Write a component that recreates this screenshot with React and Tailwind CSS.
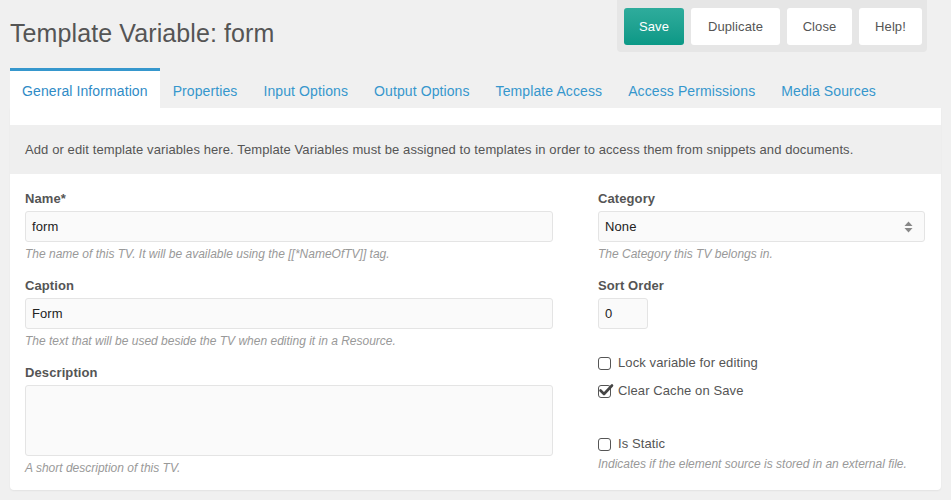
import React from 'react';

const tabs = [
  'General Information',
  'Properties',
  'Input Options',
  'Output Options',
  'Template Access',
  'Access Permissions',
  'Media Sources',
];

function Label({ children }) {
  return <div className="h-4 leading-4 text-[13px] font-bold text-[#555]">{children}</div>;
}

function Help({ children }) {
  return <div className="mt-[5px] h-[14px] leading-[14px] text-[12px] italic text-[#999] tracking-normal">{children}</div>;
}

function TextInput({ value, className = '' }) {
  return (
    <div
      className={`mt-[4px] h-[31px] flex items-center px-[6px] bg-[#fafafa] border border-[#e4e4e4] rounded-[3px] text-[13px] text-[#222] ${className}`}
    >
      {value}
    </div>
  );
}

function Checkbox({ checked, label, className = '' }) {
  return (
    <div className={`flex items-center h-4 text-[13px] text-[#555] ${className}`}>
      <span className="relative w-[13px] h-[13px] border border-[#555] rounded-[3px] mr-[7px] shrink-0">
        {checked && (
          <svg className="absolute -left-[1px] -top-[3px]" width="16" height="15" viewBox="0 0 16 15">
            <path d="M2.5 7.5 L6 11 L14 2.5" fill="none" stroke="#444" strokeWidth="2.6" strokeLinecap="round" strokeLinejoin="round" />
          </svg>
        )}
      </span>
      {label}
    </div>
  );
}

export default function App() {
  return (
    <div className="w-[951px] h-[500px] overflow-hidden bg-[#f0f0f0] font-['Liberation_Sans',Arial,sans-serif] tracking-[0.1px]">
      <div className="flex justify-between items-start">
        <h1 className="ml-[10px] mt-[19px] text-[25px] leading-7 text-[#555] font-normal tracking-[0.1px]">Template Variable: form</h1>
        <div className="mr-[24px] flex gap-[7px] bg-[#e6e6e6] pl-[7px] pr-[5px] pt-2 pb-[7px] rounded-b-[4px]">
          <button className="w-[60px] h-[37px] rounded-[3px] bg-gradient-to-b from-[#2eac9c] to-[#099886] text-white text-[13px]">Save</button>
          <button className="w-[89px] h-[37px] rounded-[3px] bg-white text-[#555] text-[13px]">Duplicate</button>
          <button className="w-[65px] h-[37px] rounded-[3px] bg-white text-[#555] text-[13px]">Close</button>
          <button className="w-[63px] h-[37px] rounded-[3px] bg-white text-[#555] text-[13px]">Help!</button>
        </div>
      </div>

      <div className="mt-[16px] ml-[10px] flex h-[40px]">
        {tabs.map((t, i) => (
          <div
            key={t}
            className={
              i === 0
                ? 'h-[40px] pl-[12px] pr-[12px] bg-white border-t-[3px] border-[#3697cd] text-[#2f8bc6] text-[14px] leading-[40px]'
                : 'px-[13px] text-[#3697cd] text-[14px] leading-[46px]'
            }
          >
            {t}
          </div>
        ))}
      </div>

      <div className="mx-[10px] h-[382px] bg-white rounded-b-[4px] shadow-[0_1px_2px_rgba(0,0,0,0.06)]">
        <div className="pt-[17px]">
          <div className="h-[49px] bg-[#efefef] flex items-center px-[15px] text-[13px] text-[#555]">
            Add or edit template variables here. Template Variables must be assigned to templates in order to access them from snippets and documents.
          </div>
        </div>
        <div className="flex gap-[45px] pl-[15px] pr-[16px] pt-[17px]">
          <div className="w-[528px]">
            <Label>Name*</Label>
            <TextInput value="form" />
            <Help>The name of this TV. It will be available using the [[*NameOfTV]] tag.</Help>
            <div className="mt-[17px]">
              <Label>Caption</Label>
            </div>
            <TextInput value="Form" />
            <Help>The text that will be used beside the TV when editing it in a Resource.</Help>
            <div className="mt-[17px]">
              <Label>Description</Label>
            </div>
            <div className="mt-[4px] h-[71px] bg-[#fafafa] border border-[#e4e4e4] rounded-[3px]"></div>
            <Help>A short description of this TV.</Help>
          </div>
          <div className="flex-1">
            <Label>Category</Label>
            <div className="mt-[4px] h-[31px] flex items-center justify-between px-[6px] pr-[11px] bg-[#fafafa] border border-[#e4e4e4] rounded-[3px] text-[13px] text-[#222]">
              None
              <svg width="9" height="12" viewBox="0 0 9 12">
                <path d="M4.5 0.5 L8.5 5 L0.5 5 Z" fill="#888" />
                <path d="M0.5 7 L8.5 7 L4.5 11.5 Z" fill="#888" />
              </svg>
            </div>
            <Help>The Category this TV belongs in.</Help>
            <div className="mt-[17px]">
              <Label>Sort Order</Label>
            </div>
            <TextInput value="0" className="w-[50px]" />
            <Checkbox className="mt-[26px]" label="Lock variable for editing" />
            <Checkbox className="mt-[12px]" checked label="Clear Cache on Save" />
            <Checkbox className="mt-[37px]" label="Is Static" />
            <div className="mt-[5px] h-[14px] leading-[14px] text-[12px] italic text-[#999] tracking-normal">Indicates if the element source is stored in an external file.</div>
          </div>
        </div>
      </div>
    </div>
  );
}
